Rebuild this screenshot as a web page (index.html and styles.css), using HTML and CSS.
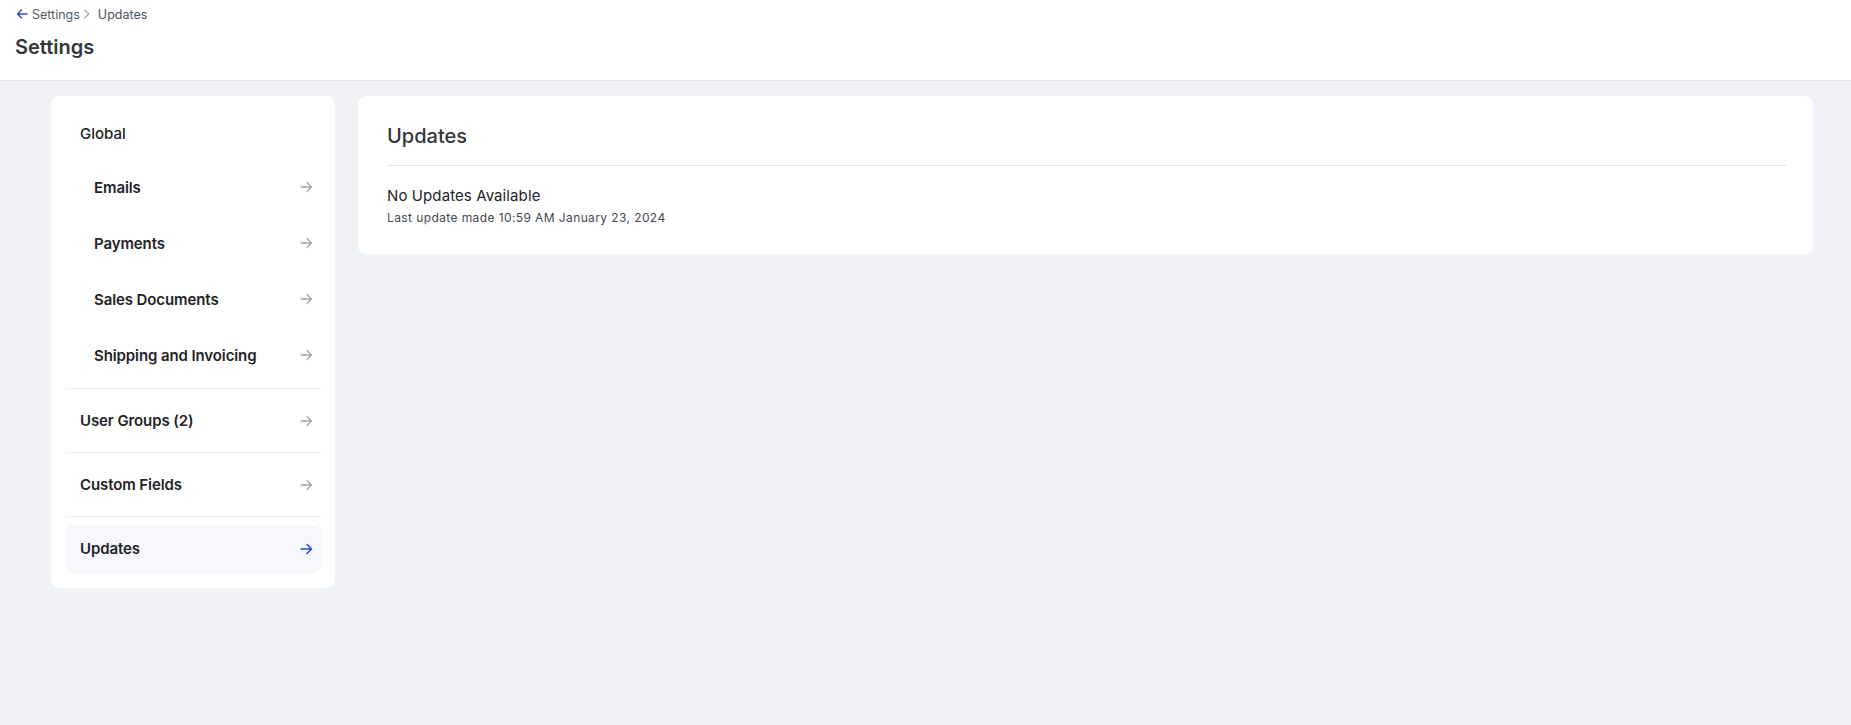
FILE: index.html
```html
<!DOCTYPE html>
<html lang="en">
<head>
<meta charset="utf-8">
<title>Settings</title>
<link rel="stylesheet" href="styles.css">
</head>
<body>
<header class="topbar">
  <nav class="crumbs">
    <svg class="crumb-back" width="12" height="12" viewBox="0 0 12 12"><path d="M11 6H1.5M5.5 2L1.5 6l4 4" fill="none" stroke="currentColor" stroke-width="1.5" stroke-linecap="round" stroke-linejoin="round"/></svg>
    <span class="crumb">Settings</span>
    <svg class="crumb-sep" width="8" height="10" viewBox="0 0 8 10"><path d="M1.5 1l4.5 4-4.5 4" fill="none" stroke="currentColor" stroke-width="1.2" stroke-linecap="round" stroke-linejoin="round"/></svg>
    <span class="crumb current">Updates</span>
  </nav>
  <h1 class="page-title">Settings</h1>
</header>
<main class="content">
  <aside class="side-card">
    <section class="side-section">
      <div class="side-head">Global</div>
      <a class="side-item sub">Emails<svg class="arrow" width="13" height="12" viewBox="0 0 13 12"><path d="M1 6h10.5M7 1.5L11.5 6 7 10.5" fill="none" stroke="currentColor" stroke-width="1.3" stroke-linecap="round" stroke-linejoin="round"/></svg></a>
      <a class="side-item sub">Payments<svg class="arrow" width="13" height="12" viewBox="0 0 13 12"><path d="M1 6h10.5M7 1.5L11.5 6 7 10.5" fill="none" stroke="currentColor" stroke-width="1.3" stroke-linecap="round" stroke-linejoin="round"/></svg></a>
      <a class="side-item sub">Sales Documents<svg class="arrow" width="13" height="12" viewBox="0 0 13 12"><path d="M1 6h10.5M7 1.5L11.5 6 7 10.5" fill="none" stroke="currentColor" stroke-width="1.3" stroke-linecap="round" stroke-linejoin="round"/></svg></a>
      <a class="side-item sub">Shipping and Invoicing<svg class="arrow" width="13" height="12" viewBox="0 0 13 12"><path d="M1 6h10.5M7 1.5L11.5 6 7 10.5" fill="none" stroke="currentColor" stroke-width="1.3" stroke-linecap="round" stroke-linejoin="round"/></svg></a>
    </section>
    <section class="side-section">
      <a class="side-item">User Groups (2)<svg class="arrow" width="13" height="12" viewBox="0 0 13 12"><path d="M1 6h10.5M7 1.5L11.5 6 7 10.5" fill="none" stroke="currentColor" stroke-width="1.3" stroke-linecap="round" stroke-linejoin="round"/></svg></a>
    </section>
    <section class="side-section">
      <a class="side-item">Custom Fields<svg class="arrow" width="13" height="12" viewBox="0 0 13 12"><path d="M1 6h10.5M7 1.5L11.5 6 7 10.5" fill="none" stroke="currentColor" stroke-width="1.3" stroke-linecap="round" stroke-linejoin="round"/></svg></a>
    </section>
    <section class="side-section">
      <a class="side-item active">Updates<svg class="arrow" width="13" height="12" viewBox="0 0 13 12"><path d="M1 6h10.5M7 1.5L11.5 6 7 10.5" fill="none" stroke="currentColor" stroke-width="1.5" stroke-linecap="round" stroke-linejoin="round"/></svg></a>
    </section>
  </aside>
  <section class="main-card">
    <h2 class="card-title">Updates</h2>
    <div class="card-body">
      <div class="status">No Updates Available</div>
      <div class="status-sub">Last update made 10:59 AM January 23, 2024</div>
    </div>
  </section>
</main>
</body>
</html>
```
FILE: styles.css
```css
* { box-sizing: border-box; }
html, body { margin: 0; padding: 0; }
body {
  font-family: Inter, "Noto Sans", "Liberation Sans", sans-serif;
  background: #eff3f6;
  color: #1f2329;
  height: 725px;
  overflow: hidden;
}
.topbar {
  background: #fff;
  height: 81px;
  border-bottom: 1px solid #e3e6ea;
  padding: 5px 15px 0;
}
.crumbs {
  display: flex;
  align-items: center;
  height: 18px;
  font-size: 12.5px;
  color: #545a63;
}
.crumb-back { color: #2b50c8; margin-left: 1px; margin-right: 4px; }
.crumb { color: #555b63; }
.crumb-sep { color: #a3a7ad; margin: 0 7px 0 3px; }
.crumb.current { color: #4b5363; }
.page-title {
  margin: 12px 0 0;
  font-size: 20px;
  font-weight: 600;
  color: #33363b;
  line-height: 24px;
}
.content {
  display: flex;
  align-items: flex-start;
  gap: 23px;
  padding: 15px 38px 0 51px;
}
.side-card {
  width: 284px;
  flex: none;
  background: #fff;
  border-radius: 8px;
  padding: 5px 14px 7.5px;
}
.side-section {
  display: flex;
  flex-direction: column;
  padding: 7.5px 0;
  border-top: 1px solid #e9ebee;
}
.side-section:first-child { border-top: none; padding: 8px 0 9px; }
.side-head {
  height: 48px;
  display: flex;
  align-items: center;
  padding-left: 15px;
  font-size: 15px;
  font-weight: 550;
  color: #1f2329;
  margin-bottom: 6px;
}
.side-item {
  height: 48px;
  display: flex;
  align-items: center;
  justify-content: space-between;
  padding: 0 8px 0 15px;
  font-size: 15px;
  font-weight: 600;
  letter-spacing: -0.1px;
  color: #1f2329;
  border-radius: 8px;
}
.side-item.sub { padding-left: 29px; }
.side-item.sub + .side-item.sub { margin-top: 8px; }
.side-item .arrow { color: #a2a4a8; }
.side-item.active { background: #f6f8fb; }
.side-item.active .arrow { color: #2447c6; }
.main-card {
  flex: 1;
  background: #fff;
  border-radius: 8px;
  padding: 25px 27px 28px 29px;
}
.card-title {
  margin: 0;
  font-size: 20px;
  font-weight: 500;
  color: #33363b;
  line-height: 30px;
  padding-bottom: 14px;
  border-bottom: 1px solid #e3e5e8;
}
.card-body { padding-top: 20px; }
.status {
  font-size: 15px;
  letter-spacing: 0.1px;
  color: #22252a;
  line-height: 20px;
}
.status-sub {
  margin-top: 4px;
  font-size: 12px;
  letter-spacing: 0.4px;
  color: #44484f;
  line-height: 16px;
}
```
